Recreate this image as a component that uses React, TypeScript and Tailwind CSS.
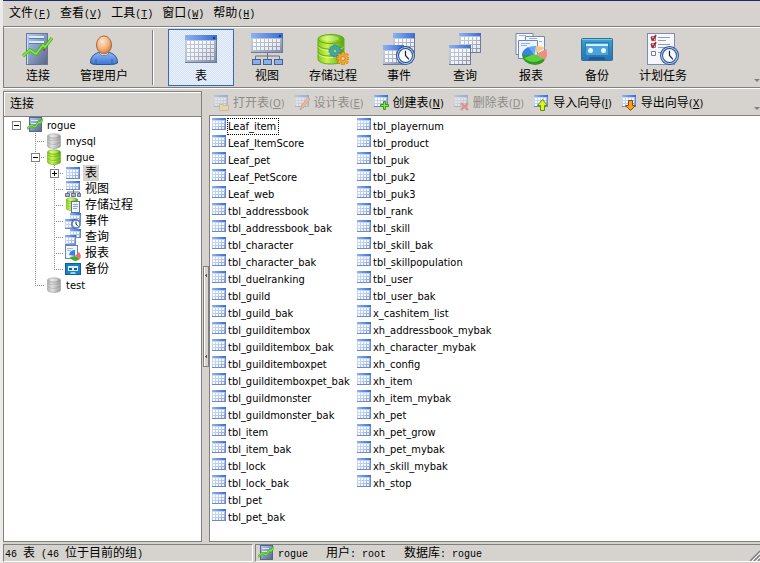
import React from "react";

const tables = [
  "Leaf_item", "Leaf_ItemScore", "Leaf_pet", "Leaf_PetScore", "Leaf_web",
  "tbl_addressbook", "tbl_addressbook_bak", "tbl_character", "tbl_character_bak",
  "tbl_duelranking", "tbl_guild", "tbl_guild_bak", "tbl_guilditembox",
  "tbl_guilditembox_bak", "tbl_guilditemboxpet", "tbl_guilditemboxpet_bak",
  "tbl_guildmonster", "tbl_guildmonster_bak", "tbl_item", "tbl_item_bak",
  "tbl_lock", "tbl_lock_bak", "tbl_pet", "tbl_pet_bak",
  "tbl_playernum", "tbl_product", "tbl_puk", "tbl_puk2", "tbl_puk3", "tbl_rank",
  "tbl_skill", "tbl_skill_bak", "tbl_skillpopulation", "tbl_user", "tbl_user_bak",
  "x_cashitem_list", "xh_addressbook_mybak", "xh_character_mybak", "xh_config",
  "xh_item", "xh_item_mybak", "xh_pet", "xh_pet_grow", "xh_pet_mybak",
  "xh_skill_mybak", "xh_stop",
];

/* ---------- icons ---------- */

function Defs() {
  return (
    <svg className="absolute h-0 w-0" aria-hidden="true">
      <defs>
        <linearGradient id="title" x1="0" y1="0" x2="1" y2="0">
          <stop offset="0" stopColor="#8db2f3" />
          <stop offset="1" stopColor="#3a6dd0" />
        </linearGradient>
        <linearGradient id="sheet" x1="0" y1="0" x2="1" y2="1">
          <stop offset="0" stopColor="#c9d2e6" />
          <stop offset="0.5" stopColor="#b4bccf" />
          <stop offset="1" stopColor="#7d869f" />
        </linearGradient>
        <linearGradient id="sheetSmall" x1="0" y1="0" x2="1" y2="1">
          <stop offset="0" stopColor="#d3e0f8" />
          <stop offset="0.5" stopColor="#bccdf0" />
          <stop offset="1" stopColor="#6f90d4" />
        </linearGradient>
        <linearGradient id="server" x1="0" y1="0" x2="1" y2="1">
          <stop offset="0" stopColor="#b4cdf5" />
          <stop offset="0.5" stopColor="#8498bf" />
          <stop offset="1" stopColor="#5a6684" />
        </linearGradient>
        <radialGradient id="skin" cx="0.4" cy="0.3" r="0.7">
          <stop offset="0" stopColor="#ffe6cc" />
          <stop offset="0.6" stopColor="#f3b27c" />
          <stop offset="1" stopColor="#c97b3c" />
        </radialGradient>
        <linearGradient id="shirt" x1="0" y1="0" x2="0" y2="1">
          <stop offset="0" stopColor="#8fb8f4" />
          <stop offset="1" stopColor="#3c74cf" />
        </linearGradient>
        <linearGradient id="green" x1="0" y1="0" x2="1" y2="0">
          <stop offset="0" stopColor="#86cc14" />
          <stop offset="0.35" stopColor="#c8f450" />
          <stop offset="1" stopColor="#58a60c" />
        </linearGradient>
        <linearGradient id="grey" x1="0" y1="0" x2="1" y2="0">
          <stop offset="0" stopColor="#b0b0b0" />
          <stop offset="0.35" stopColor="#dedede" />
          <stop offset="1" stopColor="#989898" />
        </linearGradient>
        <linearGradient id="tape" x1="0" y1="0" x2="0" y2="1">
          <stop offset="0" stopColor="#3fa6cc" />
          <stop offset="0.5" stopColor="#2d87c3" />
          <stop offset="1" stopColor="#2a74b4" />
        </linearGradient>
      </defs>
    </svg>
  );
}

type GridProps = {
  x?: number;
  y?: number;
  w: number;
  h: number;
  head: number;
  cols: number;
  rows: number;
  cell: number;
};

function Grid({ x = 0, y = 0, w, h, head, cols, rows, cell }: GridProps) {
  const small = cell < 3;
  const cells = [];
  for (let r = 0; r < rows; r++) {
    for (let c = 0; c < cols; c++) {
      cells.push(
        <rect
          key={`${r}-${c}`}
          x={x + (small ? 1 : 2) + c * (cell + 1)}
          y={y + head + 1 + r * (cell + 1)}
          width={cell}
          height={cell}
          fill="#fff"
          fillOpacity={0.95 - (r + c) * 0.03}
        />
      );
    }
  }
  return (
    <g shapeRendering="crispEdges">
      <rect x={x} y={y} width={w} height={h} fill={small ? "url(#sheetSmall)" : "url(#sheet)"} />
      <rect x={x} y={y} width={w} height={head} fill="url(#title)" />
      <path d={`M${x + w - 0.5} ${y + head}V${y + h - 0.5}H${x}`} fill="none" stroke={small ? "#6c8ac6" : "#6c7a9c"} />
      {cells}
    </g>
  );
}

function Clock({ cx, cy, r }: { cx: number; cy: number; r: number }) {
  return (
    <g>
      <circle cx={cx} cy={cy} r={r} fill="#2a4f96" />
      <circle cx={cx} cy={cy} r={r * 0.9} fill="#b4cdf2" />
      <circle cx={cx} cy={cy} r={r * 0.78} fill="#24488f" />
      <circle cx={cx} cy={cy} r={r * 0.68} fill="#f7fbff" />
      <path d={`M${cx} ${cy - r * 0.5}V${cy}L${cx + r * 0.36} ${cy + r * 0.4}`} fill="none" stroke="#222" strokeWidth={r > 6 ? 1.2 : 1} />
    </g>
  );
}

function Cylinder({ fill, edge }: { fill: string; edge: string }) {
  return (
    <g>
      <path d="M1 6v20c0 3 5.500 5 13 5s13-2 13-5V6z" fill={fill} stroke={edge} />
      <ellipse cx="14" cy="6" rx="13" ry="4.500" fill={fill} stroke={edge} />
      <ellipse cx="13" cy="5.500" rx="9" ry="2.500" fill="#fff" fillOpacity="0.3" />
      <path d="M1 12c2 3 6 4 13 4s11-1 13-4M1 19c2 3 6 4 13 4s11-1 13-4" fill="none" stroke={edge} />
      <path d="M1 13.500c2 3 6 4 13 4s11-1 13-4M1 20.500c2 3 6 4 13 4s11-1 13-4" fill="none" stroke="#fff" strokeOpacity="0.5" />
    </g>
  );
}

function Gear({ cx, cy, r, color, edge, hole }: { cx: number; cy: number; r: number; color: string; edge: string; hole: string }) {
  return (
    <g>
      {[0, 45, 90, 135].map((a) => (
        <rect key={a} x={cx - 1.3} y={cy - r} width={2.6} height={r * 2} fill={color} stroke={edge} strokeWidth={0.5} transform={`rotate(${a} ${cx} ${cy})`} />
      ))}
      <circle cx={cx} cy={cy} r={r * 0.7} fill={color} />
      <circle cx={cx} cy={cy} r={r * 0.32} fill={hole} stroke={edge} strokeWidth={0.6} />
    </g>
  );
}

type IconName =
  | "server" | "user" | "table" | "view" | "proc" | "event"
  | "query" | "report" | "backup" | "schedule";

function BigIcon({ name }: { name: IconName }) {
  return (
    <svg width="32" height="32" viewBox="0 0 32 32" aria-hidden="true">
      {name === "server" && (
        <>
          <rect x="4.500" y="0.500" width="21" height="31" fill="url(#server)" stroke="#667696" />
          <path d="M5.500 1v30" stroke="#c9dcfa" />
          <path d="M7 4h15M7 9h15" stroke="#dfeafd" strokeWidth="2" />
          <path d="M7 5.500h15M7 10.500h15" stroke="#5a7cb8" />
          <rect x="21" y="16" width="2" height="2" fill="#d33" />
          <path d="M1 23l7-6 6 4 7-9 2 2 7-9" fill="none" stroke="#3ba81c" strokeWidth="3" />
          <path d="M1 23l7-6 6 4 7-9 2 2 7-9" fill="none" stroke="#83ea35" strokeWidth="1.800" />
        </>
      )}
      {name === "user" && (
        <>
          <path d="M2.500 30c0-6 3-9 8-10.500h11c5 1.500 8 4.500 8 10.500q-3 1.500-6 1.500H8q-4 0-5.500-1.500z" fill="url(#shirt)" stroke="#2c55a2" />
          <path d="M11 19.500c1 4 9 4 10 0z" fill="#fff" stroke="#2c55a2" strokeWidth="0.600" />
          <path d="M8 26v5M24 26v5" stroke="#2f62b8" />
          <ellipse cx="16" cy="12" rx="7.500" ry="9" fill="url(#skin)" stroke="#a6683a" />
        </>
      )}
      {name === "table" && (
        <>
          <Grid y={2} w={32} h={28} head={5} cols={7} rows={5} cell={3} />
          <rect x="28" y="4" width="2" height="2" fill="#173f92" />
        </>
      )}
      {name === "view" && (
        <>
          <Grid w={32} h={20} head={5} cols={7} rows={3} cell={3} />
          <rect x="28" y="2" width="2" height="2" fill="#173f92" />
          <path d="M16.500 20v7M4.500 27v-4h24v4" fill="none" stroke="#667088" />
          {[1, 12, 23].map((x) => (
            <rect key={x} x={x + 0.5} y="26.500" width="8" height="5" fill="#86b0f0" stroke="#4b5e86" />
          ))}
        </>
      )}
      {name === "proc" && (
        <>
          <Cylinder fill="url(#green)" edge="#62ab16" />
          <Gear cx={18} cy={18} r={6} color="#3fa5bd" edge="#247588" hole="#a6e02c" />
          <Gear cx={26} cy={25.5} r={6.5} color="#f5a623" edge="#bd6a0c" hole="#d6d3ce" />
        </>
      )}
      {name === "event" && (
        <>
          <Grid x={10} w={22} h={20} head={5} cols={5} rows={3} cell={3} />
          <Grid y={12} w={21} h={20} head={5} cols={4} rows={3} cell={3} />
          <Clock cx={22.5} cy={22.5} r={9.5} />
        </>
      )}
      {name === "query" && (
        <>
          <Grid x={10} w={22} h={20} head={3} cols={5} rows={4} cell={3} />
          <Grid y={12} w={22} h={20} head={3} cols={5} rows={4} cell={3} />
        </>
      )}
      {name === "report" && (
        <>
          <path d="M1 .500h17v21H1z" fill="#f7faff" stroke="#7387b1" />
          <path d="M10.500 3.500h19v22h-19z" fill="#f7faff" stroke="#7387b1" />
          <path d="M3.500 7.500h19v18h-19z" fill="#edf4ff" stroke="#7387b1" />
          <path d="M4 2.500h7M14 5.500h8M6 10.500h9M6 12.500h6M24 8.500h3" stroke="#8fb0ea" />
          <path d="M20 21L12 15a12 8 0 0 1 9-2z" fill="#66a9f7" />
          <path d="M20 22L13 14q-6 3-6 8z" fill="#3a83e6" />
          <path d="M20 22L7 22q1 9 13 10 9-1 10-6z" fill="#2f9a24" />
          <path d="M19 21L9 25q4 4 10 4 7-1 10-4z" fill="#5fce3f" />
          <path d="M21 21l9 6q4-6 1-11z" fill="#ed8f89" />
          <path d="M21 20l9-5q-3-2-9-2z" fill="#f6c97e" />
        </>
      )}
      {name === "backup" && (
        <>
          <rect x="0.500" y="5.500" width="31" height="22" rx="1" fill="url(#tape)" stroke="#2c7096" />
          <path d="M1 6.500h30" stroke="#75c9df" />
          <rect x="4.500" y="9.500" width="23" height="13" fill="#4aa4dc" stroke="#2f7bb4" />
          <path d="M5 11h22v2H5z" fill="#d4effc" />
          <circle cx="9.500" cy="17.500" r="2.500" fill="#eaf8ff" />
          <circle cx="22.500" cy="17.500" r="2.500" fill="#eaf8ff" />
          <path d="M7 27l2-3h14l2 3z" fill="#1d5d96" />
        </>
      )}
      {name === "schedule" && (
        <>
          <rect x="0.500" y="0.500" width="27" height="31" fill="#f5f8fe" stroke="#7e8caf" />
          <path d="M11 4.500h12M11 7.500h8M11 11.500h12M11 14.500h8M11 19.500h6" stroke="#949cb2" />
          <path d="M4.500 3.500h4v4h-4zM4.500 10.500h4v4h-4zM4.500 18.500h4v4h-4z" fill="#fff" stroke="#7b7f8c" />
          <path d="M4 4l2 3 3-5M4 11l2 3 3-5" fill="none" stroke="#b8221f" strokeWidth="1.600" />
          <Clock cx={22.5} cy={22.5} r={9.5} />
        </>
      )}
    </svg>
  );
}

type SmallName = "server" | "db" | "dbOff" | "table" | "view" | "proc" | "event" | "query" | "report" | "backup";

function SmallIcon({ name }: { name: SmallName }) {
  return (
    <svg className="shrink-0" width="16" height="16" viewBox="0 0 16 16" aria-hidden="true">
      {name === "server" && (
        <>
          <rect x="2.500" y="0.500" width="12" height="14" fill="url(#server)" stroke="#54678f" />
          <path d="M4 3.500h7M4 6.500h7" stroke="#d8e6fd" />
          <path d="M0 12l4-4 4 2 4-5 1 1 3-4" fill="none" stroke="#3ba81c" strokeWidth="2.200" />
          <path d="M0 12l4-4 4 2 4-5 1 1 3-4" fill="none" stroke="#83ea35" strokeWidth="1.200" />
        </>
      )}
      {(name === "db" || name === "dbOff") && (
        <svg width="16" height="16" viewBox="-1 0 30 32">
          <Cylinder fill={name === "db" ? "url(#green)" : "url(#grey)"} edge={name === "db" ? "#5da613" : "#999"} />
        </svg>
      )}
      {name === "table" && <Grid x={1} y={2} w={14} h={12} head={2} cols={4} rows={3} cell={2} />}
      {name === "view" && (
        <>
          <Grid x={1} w={14} h={9} head={2} cols={4} rows={2} cell={2} />
          <path d="M8.500 9v4M2.500 13v-2h12v2" fill="none" stroke="#66718c" />
          <path d="M.500 12.500h4v3h-4zM6.500 12.500h4v3h-4zM12.500 12.500h3v3h-3z" fill="#a9b8d2" stroke="#66718c" />
        </>
      )}
      {name === "proc" && (
        <>
          <svg width="14" height="14" viewBox="-1 0 30 32">
            <Cylinder fill="url(#green)" edge="#5da613" />
          </svg>
          <rect x="6.500" y="4.500" width="8" height="11" fill="#f1f6ff" stroke="#607299" />
          <path d="M8 7.500h5M8 9.500h5M8 11.500h4" stroke="#8ba6da" />
        </>
      )}
      {name === "event" && (
        <>
          <Grid x={5} w={11} h={9} head={2} cols={3} rows={2} cell={2} />
          <Grid y={6} w={11} h={10} head={2} cols={3} rows={2} cell={2} />
          <Clock cx={11} cy={11} r={4.8} />
        </>
      )}
      {name === "query" && (
        <>
          <Grid x={5} w={11} h={9} head={2} cols={3} rows={2} cell={2} />
          <Grid y={6} w={11} h={10} head={2} cols={3} rows={2} cell={2} />
        </>
      )}
      {name === "report" && (
        <>
          <rect x="0.500" y="0.500" width="12" height="13" fill="#f1f6ff" stroke="#6a83b5" />
          <path d="M2 3.500h6M2 5.500h4" stroke="#a3bce6" />
          <path d="M10 11V5q-5 0-6 5z" fill="#3a83e6" />
          <path d="M10 11l-5 1q2 4 6 4 3-1 4-2z" fill="#3fae2c" />
          <path d="M10 11l5 3q2-4-1-7z" fill="#ed6f69" />
        </>
      )}
      {name === "backup" && (
        <>
          <rect x="0.500" y="2.500" width="15" height="11" fill="#1f7fc6" stroke="#145c94" />
          <rect x="3" y="5" width="10" height="5" fill="#d9f1ff" />
          <rect x="4" y="7" width="3" height="2" fill="#145c94" />
          <rect x="9" y="7" width="3" height="2" fill="#145c94" />
          <path d="M5 13l1-2h4l1 2z" fill="#9bd4f5" />
        </>
      )}
    </svg>
  );
}

type ActionMark = "open" | "design" | "new" | "delete" | "import" | "export";

function ActionIcon({ mark }: { mark: ActionMark }) {
  return (
    <svg className="shrink-0" width="16" height="16" viewBox="0 0 16 16" aria-hidden="true">
      <Grid w={14} h={12} head={2} cols={4} rows={3} cell={2} />
      {mark === "open" && <path d="M5.500 15.500v-6h3l1 1h5v5z" fill="#f9dc7a" stroke="#c8972c" />}
      {mark === "design" && <path d="M5 15l2-5 6-8 2 2-6 8z" fill="#f0a04c" stroke="#c2502c" strokeWidth="0.800" />}
      {mark === "new" && <path d="M9.500 6.500h2v3h3v2h-3v3h-2v-3h-3v-2h3z" fill="#8ae03e" stroke="#3d9a1a" />}
      {mark === "delete" && <path d="M7 8l7 7M14 8l-7 7" stroke="#e0392b" strokeWidth="2.400" />}
      {mark === "import" && <path d="M6.500 15.500v-5h-3l5-6 5 6h-3v5z" fill="#d9f51f" stroke="#71860a" />}
      {mark === "export" && <path d="M6.500 5.500v5h-3l5 5 5-5h-3v-5z" fill="#f9a11d" stroke="#8a4a08" />}
    </svg>
  );
}

/* ---------- menu bar ---------- */

const menus = [
  ["文件", "F"],
  ["查看", "V"],
  ["工具", "T"],
  ["窗口", "W"],
  ["帮助", "H"],
];

function MenuBar() {
  return (
    <nav className="flex h-[26px] items-center gap-[9px] border-t border-[#1c2b66] pl-1.5 text-xs">
      {menus.map(([label, key]) => (
        <button key={key} type="button" className="flex items-baseline whitespace-nowrap">
          {label}
          <span className="font-['Liberation_Mono',monospace] text-[10px]">
            (<u>{key}</u>)
          </span>
        </button>
      ))}
    </nav>
  );
}

/* ---------- main toolbar ---------- */

const connectTools: [string, IconName][] = [
  ["连接", "server"],
  ["管理用户", "user"],
];

const objectTools: [string, IconName][] = [
  ["表", "table"],
  ["视图", "view"],
  ["存储过程", "proc"],
  ["事件", "event"],
  ["查询", "query"],
  ["报表", "report"],
  ["备份", "backup"],
  ["计划任务", "schedule"],
];

function ToolButton({ label, icon, active = false }: { label: string; icon: IconName; active?: boolean }) {
  const look = active
    ? "border-[#316ac5] bg-[conic-gradient(#ecf2fc_25%,#d3e2f8_0_50%,#ecf2fc_0_75%,#d3e2f8_0)] bg-[length:2px_2px]"
    : "border-transparent";
  return (
    <button type="button" aria-pressed={active} className={`flex h-[57px] w-[66px] shrink-0 flex-col items-center gap-[3px] border pt-[3px] text-xs ${look}`}>
      <BigIcon name={icon} />
      {label}
    </button>
  );
}

function Chevron() {
  return (
    <svg className="ml-auto shrink-0 self-end" width="6" height="9" viewBox="0 0 6 9" aria-hidden="true">
      <path d="M0 1h6L3 4z" fill="#808080" />
    </svg>
  );
}

function Toolbar() {
  return (
    <div className="flex h-[62px] items-center border-y border-l border-[#808080] pl-px shadow-[inset_0_1px_#fff,0_1px_#fff]">
      {connectTools.map(([label, icon]) => (
        <ToolButton key={label} label={label} icon={icon} />
      ))}
      <div className="mr-3.5 ml-[15px] h-[55px] w-0.5 border-r border-l border-r-white border-l-[#808080]" />
      {objectTools.map(([label, icon]) => (
        <ToolButton key={label} label={label} icon={icon} active={icon === "table"} />
      ))}
      <Chevron />
    </div>
  );
}

/* ---------- connection tree ---------- */

// one letter for each 19px cell: blank, | line, t tee, l last, - open box, + closed box
type Node = { guides: string; icon: SmallName; label: string; selected?: boolean };

const tree: Node[] = [
  { guides: "o", icon: "server", label: "rogue" },
  { guides: " t", icon: "dbOff", label: "mysql" },
  { guides: " -", icon: "db", label: "rogue" },
  { guides: " |+", icon: "table", label: "表", selected: true },
  { guides: " |t", icon: "view", label: "视图" },
  { guides: " |t", icon: "proc", label: "存储过程" },
  { guides: " |t", icon: "event", label: "事件" },
  { guides: " |t", icon: "query", label: "查询" },
  { guides: " |t", icon: "report", label: "报表" },
  { guides: " |l", icon: "backup", label: "备份" },
  { guides: " l", icon: "dbOff", label: "test" },
];

function Guide({ kind }: { kind: string }) {
  const box = kind === "o" || kind === "-" || kind === "+";
  return (
    <svg className="shrink-0" width="19" height="16" viewBox="0 0 19 16" shapeRendering="crispEdges" aria-hidden="true">
      <g stroke="#8c8c8c" strokeDasharray="1 1" fill="none">
        {"|t-+".includes(kind) && <path d="M9.500 0v16" />}
        {kind === "l" && <path d="M9.500 0v8" />}
        {"tl-+".includes(kind) && <path d="M9 8.500h10" />}
      </g>
      {box && (
        <>
          <rect x="5.500" y="4.500" width="8" height="8" fill="#fff" stroke="#808080" />
          <path d={kind === "+" ? "M7 8.500h5M9.500 6v5" : "M7 8.500h5"} stroke="#000" />
        </>
      )}
    </svg>
  );
}

function ConnectionPanel() {
  return (
    <aside className="flex w-[199px] shrink-0 flex-col border border-[#808080] bg-white">
      <h2 className="flex h-[25px] items-center border-b border-[#808080] bg-[#d6d3ce] pl-1.5 text-xs shadow-[inset_1px_1px_#fff]">连接</h2>
      <ul role="tree" className="pl-[3px]">
        {tree.map((node, i) => (
          <li key={i} role="treeitem" aria-selected={!!node.selected} className="flex h-4 items-center">
            {node.guides.split("").map((kind, j) => (
              <Guide key={j} kind={kind} />
            ))}
            <span className="flex items-center gap-0.5 pl-px">
              <SmallIcon name={node.icon} />
              <span
                className={`px-0.5 whitespace-nowrap ${/[a-z]/.test(node.label) ? "pt-px text-[11px] leading-[15px]" : "text-xs leading-4"} ${
                  node.selected ? "bg-[#d6d3ce]" : ""
                }`}
              >
                {node.label}
              </span>
            </span>
          </li>
        ))}
      </ul>
    </aside>
  );
}

function Splitter() {
  return (
    <div className="flex w-[7px] shrink-0 flex-col justify-center px-px">
      <svg width="6" height="101" viewBox="0 0 6 101" shapeRendering="crispEdges" aria-hidden="true">
        <rect x="0.500" y="0.500" width="5" height="100" fill="#d6d3ce" stroke="#808080" />
        <path d="M1.500 1v99" stroke="#fff" />
        <path d="M4 7v5L2 9.500zM4 88v5l-2-2.500z" fill="#555" />
      </svg>
    </div>
  );
}

/* ---------- object list ---------- */

const actions: { label: string; hotkey: string; mark: ActionMark; disabled?: boolean }[] = [
  { label: "打开表", hotkey: "O", mark: "open", disabled: true },
  { label: "设计表", hotkey: "E", mark: "design", disabled: true },
  { label: "创建表", hotkey: "N", mark: "new" },
  { label: "删除表", hotkey: "D", mark: "delete", disabled: true },
  { label: "导入向导", hotkey: "I", mark: "import" },
  { label: "导出向导", hotkey: "X", mark: "export" },
];

function ActionBar() {
  return (
    <div className="flex h-6 items-center gap-2.5 pl-[5px]">
      {actions.map((a) => (
        <button key={a.mark} type="button" disabled={a.disabled} className="flex shrink-0 items-center gap-[3px] whitespace-nowrap disabled:text-[#8e8c88]">
          <span className={a.disabled ? "opacity-40" : ""}>
            <ActionIcon mark={a.mark} />
          </span>
          <span className="text-xs">
            {a.label}
            <span className="text-[11px]">
              (<u>{a.hotkey}</u>)
            </span>
          </span>
        </button>
      ))}
      <Chevron />
    </div>
  );
}

function ObjectPanel() {
  return (
    <main className="flex min-w-0 flex-1 flex-col">
      <ActionBar />
      <div className="flex-1 border-y border-l border-[#808080] bg-white pt-0.5 pl-0.5">
        <ul className="grid auto-cols-[145px] grid-flow-col grid-rows-[repeat(24,17px)]">
          {tables.map((name, i) => (
            <li key={name} className="flex items-start">
              <svg className="shrink-0" width="14" height="13" viewBox="0 0 14 13" aria-hidden="true">
                <Grid w={14} h={12} head={2} cols={4} rows={3} cell={2} />
              </svg>
              <span
                className={`ml-px border border-dotted pt-px pr-0.5 text-[11px] leading-[14px] whitespace-nowrap ${
                  i === 0 ? "border-black" : "border-transparent"
                }`}
              >
                {name}
              </span>
            </li>
          ))}
        </ul>
      </div>
    </main>
  );
}

/* ---------- status bar ---------- */

function Mono({ children }: { children: React.ReactNode }) {
  return <span className="font-['Liberation_Mono',monospace] text-[10px] whitespace-pre">{children}</span>;
}

function StatusBar() {
  return (
    <footer className="flex h-[18px] gap-0.5 text-xs whitespace-nowrap">
      <div className="flex w-[250px] shrink-0 items-center border border-[#808080] border-r-white border-b-white pl-px">
        <span><Mono>46 </Mono>表<Mono> (46 </Mono>位于目前的组<Mono>)</Mono></span>
      </div>
      <div className="flex flex-1 items-center gap-[18px] border border-[#808080] border-r-0 border-b-white pl-0.5">
        <span className="flex items-center gap-1">
          <SmallIcon name="server" />
          <span><Mono>rogue</Mono></span>
        </span>
        <span>用户<Mono>: root</Mono></span>
        <span>数据库<Mono>: rogue</Mono></span>
        <svg className="ml-auto self-end" width="10" height="12" viewBox="0 0 10 12" aria-hidden="true">
          <path d="M0 12L10 2M4 12l6-6M8 12l2-2" stroke="#808080" strokeWidth="1.500" />
          <path d="M2 12l8-8M6 12l4-4" stroke="#fff" />
        </svg>
      </div>
    </footer>
  );
}

export default function App() {
  return (
    <div className="flex min-h-screen flex-col border-l-[3px] border-[#eceae6] bg-[#d6d3ce] pb-px font-['DejaVu_Sans_Condensed','Noto_Sans_CJK_SC',sans-serif] text-black">
      <Defs />
      <MenuBar />
      <Toolbar />
      <div className="flex flex-1 pt-[3px] pb-0.5">
        <ConnectionPanel />
        <Splitter />
        <ObjectPanel />
      </div>
      <StatusBar />
    </div>
  );
}
